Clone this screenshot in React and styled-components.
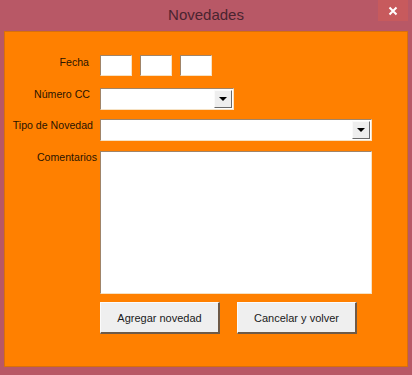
import React from 'react'
import styled, { createGlobalStyle } from 'styled-components'

const GlobalStyle = createGlobalStyle`
    html, body {
        margin: 0;
        padding: 0;
        background: #b85866;
    }
`

const Window = styled.div`
    width: 412px;
    height: 375px;
    box-sizing: border-box;
    background-color: #b85866;
    padding: 0 4px 8px 4px;
    display: flex;
    flex-direction: column;
    font-family: "Liberation Sans", Arial, sans-serif;
`

const TitleBar = styled.div`
    position: relative;
    height: 31px;
    display: flex;
    align-items: center;
    justify-content: center;
    flex-shrink: 0;
`

const Title = styled.div`
    color: #4a2430;
    font-size: 15px;
    padding-bottom: 2px;
`

const CloseButton = styled.div`
    position: absolute;
    top: 0;
    right: 0;
    width: 30px;
    height: 21px;
    background-color: #c75a5d;
    color: #ffffff;
    display: flex;
    align-items: center;
    justify-content: center;
`

const Content = styled.div`
    flex: 1;
    background-color: #ff8000;
    border: 1px solid #d8700c;
    padding: 23px 0 0 0;
    display: grid;
    grid-template-columns: 95px 1fr;
    grid-auto-rows: auto;
    align-content: start;
`

const Label = styled.div`
    font-size: 10.6px;
    line-height: 13px;
    color: #2a1400;
    text-align: right;
    align-self: start;
    padding-right: ${p => p.$pr}px;
    padding-top: ${p => p.$pt || 0}px;
    white-space: nowrap;
`

const Field = styled.div`
    display: flex;
    gap: 8px;
    margin-bottom: ${p => p.$mb}px;
`

const Sunken = styled.div`
    box-sizing: border-box;
    background-color: #ffffff;
    border-top: 1px solid #a08468;
    border-left: 1px solid #a08468;
    border-right: 1px solid #f6e2c4;
    border-bottom: 1px solid #f6e2c4;
`

const DateBox = styled(Sunken)`
    width: 32px;
    height: 21px;
`

const Combo = styled(Sunken)`
    width: ${p => p.$w}px;
    height: 22px;
    display: flex;
    justify-content: flex-end;
    align-items: stretch;
    padding: 1px;
`

const DropButton = styled.div`
    width: 16px;
    background-color: #eeeeee;
    border-right: 1px solid #6a6a6a;
    border-bottom: 1px solid #6a6a6a;
    border-top: 1px solid #fafafa;
    border-left: 1px solid #fafafa;
    display: flex;
    align-items: center;
    justify-content: center;
`

const Arrow = styled.div`
    width: 0;
    height: 0;
    border-left: 4px solid transparent;
    border-right: 4px solid transparent;
    border-top: 4px solid #000000;
`

const TextArea = styled(Sunken)`
    width: 272px;
    height: 143px;
`

const Buttons = styled.div`
    grid-column: 2;
    display: flex;
    gap: 17px;
`

const Button = styled.div`
    box-sizing: border-box;
    width: 120px;
    height: 32px;
    background-color: #efefef;
    border-top: 1px solid #fbfbfb;
    border-left: 1px solid #fbfbfb;
    border-right: 2px solid #6e5a48;
    border-bottom: 2px solid #6e5a48;
    font-size: 11px;
    color: #1a1a1a;
    display: flex;
    align-items: center;
    justify-content: center;
`

function Dropdown({ width }) {
    return (
        <Combo $w={width}>
            <DropButton>
                <Arrow />
            </DropButton>
        </Combo>
    )
}

export default function App() {
    return (
        <>
            <GlobalStyle />
            <Window>
                <TitleBar>
                    <Title>Novedades</Title>
                    <CloseButton>
                        <svg width="10" height="10" viewBox="0 0 10 10">
                            <path d="M1.5 1.5 L8.5 8.5 M8.5 1.5 L1.5 8.5" stroke="#ffffff" strokeWidth="2" />
                        </svg>
                    </CloseButton>
                </TitleBar>
                <Content>
                    <Label $pr={11} $pt={1}>Fecha</Label>
                    <Field $mb={12}>
                        <DateBox />
                        <DateBox />
                        <DateBox />
                    </Field>

                    <Label $pr={10}>Número CC</Label>
                    <Field $mb={9}>
                        <Dropdown width={134} />
                    </Field>

                    <Label $pr={7}>Tipo de Novedad</Label>
                    <Field $mb={10}>
                        <Dropdown width={272} />
                    </Field>

                    <Label $pr={3}>Comentarios</Label>
                    <Field $mb={8}>
                        <TextArea />
                    </Field>

                    <Buttons>
                        <Button>Agregar novedad</Button>
                        <Button>Cancelar y volver</Button>
                    </Buttons>
                </Content>
            </Window>
        </>
    )
}
